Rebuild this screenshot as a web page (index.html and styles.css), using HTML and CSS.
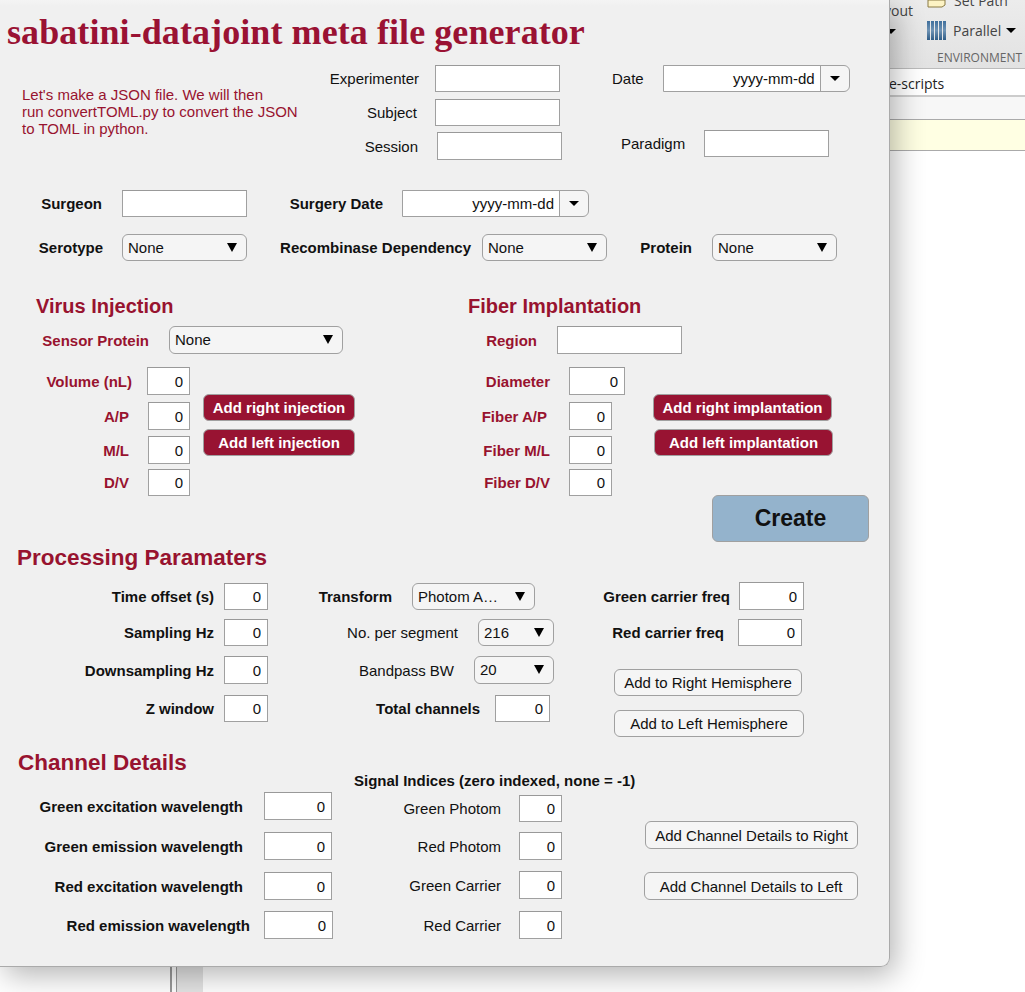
FILE: index.html
```html
<!DOCTYPE html>
<html lang="en">
<head>
    <meta charset="UTF-8">
    <meta name="viewport" content="width=device-width, initial-scale=1.0">
    <title>sabatini-datajoint meta file generator</title>
    <link rel="stylesheet" href="styles.css">
</head>
<body>
<div class="desktop">
    <div class="strips"><span class="strip-line"></span><span class="strip-dark"></span></div>

    <!-- matlab window behind the app -->
    <div class="ribbon">
        <div class="ribbon-layout"><span>Layout</span><i class="caret-sm"></i></div>
        <div class="ribbon-env">
            <div class="ribbon-item setpath">
                <svg width="20" height="8" viewBox="0 0 20 8"><path d="M1 0h17v5l-3 2H1z" fill="#fdf3c4" stroke="#8a7a45"/></svg>
                <span>Set Path</span>
            </div>
            <div class="ribbon-item">
                <svg width="19" height="19" viewBox="0 0 19 19">
                    <defs><linearGradient id="bar" x1="0" y1="0" x2="0" y2="1"><stop offset="0" stop-color="#3f6f9c"/><stop offset="0.5" stop-color="#6f93b4"/><stop offset="1" stop-color="#2f5c86"/></linearGradient></defs>
                    <path d="M0 0h3v19H0zM4 0h3v19H4zM8 0h3v19H8zM12 0h3v19h-3zM16 0h3v19h-3z" fill="url(#bar)"/>
                </svg>
                <span>Parallel</span><i class="caret-sm"></i>
            </div>
            <div class="ribbon-title">ENVIRONMENT</div>
        </div>
    </div>
    <div class="pathbar">e-scripts</div>
    <div class="tabbar"></div>
    <div class="notice"></div>

    <!-- the app window -->
    <main class="window">
        <h1 class="title">sabatini-datajoint meta file generator</h1>

        <section class="top">
            <p class="intro">Let's make a JSON file. We will then<br>run convertTOML.py to convert the JSON<br>to TOML in python.</p>
            <div class="ids">
                <div class="row"><label>Experimenter</label><input class="box"></div>
                <div class="row"><label>Subject</label><input class="box"></div>
                <div class="row"><label>Session</label><input class="box tall"></div>
            </div>
            <div class="dates">
                <div class="row"><label>Date</label><div class="date"><span>yyyy-mm-dd</span><b><i class="caret-sm"></i></b></div></div>
                <div class="row"><label>Paradigm</label><input class="box"></div>
            </div>
        </section>

        <section class="surgery">
            <label class="strong">Surgeon</label><input class="box">
            <label class="strong">Surgery Date</label><div class="date"><span>yyyy-mm-dd</span><b><i class="caret-sm"></i></b></div>
        </section>

        <section class="virus-opts">
            <label class="strong">Serotype</label><div class="drop">None</div>
            <label class="strong">Recombinase Dependency</label><div class="drop">None</div>
            <label class="strong">Protein</label><div class="drop">None</div>
        </section>

        <section class="implant">
            <div class="virus">
                <h2>Virus Injection</h2>
                <div class="sensor"><label class="strong red">Sensor Protein</label><div class="drop tall">None</div></div>
                <div class="coords-wrap">
                    <div class="coords">
                        <div class="coord"><label class="strong red">Volume (nL)</label><input class="box tall num" value="0"></div>
                        <div class="coord"><label class="strong red">A/P</label><input class="box tall num" value="0"></div>
                        <div class="coord"><label class="strong red">M/L</label><input class="box tall num" value="0"></div>
                        <div class="coord"><label class="strong red">D/V</label><input class="box num" value="0"></div>
                    </div>
                    <div class="actions">
                        <button class="btn-red">Add right injection</button>
                        <button class="btn-red">Add left injection</button>
                    </div>
                </div>
            </div>
            <div class="fiber">
                <h2>Fiber Implantation</h2>
                <div class="sensor"><label class="strong red">Region</label><input class="box tall"></div>
                <div class="coords-wrap">
                    <div class="coords">
                        <div class="coord"><label class="strong red">Diameter</label><input class="box tall num" value="0"></div>
                        <div class="coord"><label class="strong red">Fiber A/P</label><input class="box tall num" value="0"></div>
                        <div class="coord"><label class="strong red">Fiber M/L</label><input class="box tall num" value="0"></div>
                        <div class="coord"><label class="strong red">Fiber D/V</label><input class="box num" value="0"></div>
                    </div>
                    <div class="actions">
                        <button class="btn-red">Add right implantation</button>
                        <button class="btn-red">Add left implantation</button>
                        <button class="btn-create">Create</button>
                    </div>
                </div>
            </div>
        </section>

        <section class="processing">
            <h2>Processing Paramaters</h2>
            <div class="proc-cols">
                <div class="proc-left">
                    <div class="coord"><label class="strong">Time offset (s)</label><input class="box num" value="0"></div>
                    <div class="coord"><label class="strong">Sampling Hz</label><input class="box num" value="0"></div>
                    <div class="coord"><label class="strong">Downsampling Hz</label><input class="box tall num" value="0"></div>
                    <div class="coord"><label class="strong">Z window</label><input class="box num" value="0"></div>
                </div>
                <div class="proc-mid">
                    <div class="coord"><label class="strong">Transform</label><div class="drop">Photom A…</div></div>
                    <div class="coord"><label>No. per segment</label><div class="drop">216</div></div>
                    <div class="coord"><label>Bandpass BW</label><div class="drop tall">20</div></div>
                    <div class="coord"><label class="strong">Total channels</label><input class="box num" value="0"></div>
                </div>
                <div class="proc-right">
                    <div class="coord"><label class="strong">Green carrier freq</label><input class="box tall num" value="0"></div>
                    <div class="coord"><label class="strong">Red carrier freq</label><input class="box num" value="0"></div>
                    <button class="btn">Add to Right Hemisphere</button>
                    <button class="btn">Add to Left Hemisphere</button>
                </div>
            </div>
        </section>

        <section class="channels">
            <div class="chan-left">
                <h2>Channel Details</h2>
                <div class="coord"><label class="strong">Green excitation wavelength</label><input class="box tall num" value="0"></div>
                <div class="coord"><label class="strong">Green emission wavelength</label><input class="box tall num" value="0"></div>
                <div class="coord"><label class="strong">Red excitation wavelength</label><input class="box tall num" value="0"></div>
                <div class="coord"><label class="strong">Red emission wavelength</label><input class="box tall num" value="0"></div>
            </div>
            <div class="chan-mid">
                <h3>Signal Indices (zero indexed, none = -1)</h3>
                <div class="coord"><label>Green Photom</label><input class="box num" value="0"></div>
                <div class="coord"><label>Red Photom</label><input class="box tall num" value="0"></div>
                <div class="coord"><label>Green Carrier</label><input class="box tall num" value="0"></div>
                <div class="coord"><label>Red Carrier</label><input class="box tall num" value="0"></div>
            </div>
            <div class="chan-right">
                <button class="btn tall">Add Channel Details to Right</button>
                <button class="btn tall">Add Channel Details to Left</button>
            </div>
        </section>
    </main>
</div>
</body>
</html>
```

FILE: styles.css
```css
* {
    box-sizing: border-box;
}

body {
    margin: 0;
    background-color: white;
    font-family: "Liberation Sans", Arial, sans-serif;
    font-size: 15px;
    color: #111;
}

.desktop {
    position: relative;
    height: 992px;
    padding-left: 889px;
    overflow: hidden;
}

/* background window */
.strips {
    position: absolute;
    left: 170px;
    top: 900px;
    bottom: 0;
    display: flex;
    width: 33px;
}

.strip-line {
    width: 7px;
    border-left: 2px solid #999;
    border-right: 1px solid #999;
}

.strip-dark {
    flex: 1;
    background-color: #e4e4e4;
}

.ribbon {
    display: flex;
    height: 68px;
    background: linear-gradient(#ececec, #e2e2e2);
    font-family: "Open Sans", sans-serif;
    font-size: 14px;
    color: #444;
}

.ribbon-layout {
    width: 38px;
    margin-left: -20px;
    padding-top: 1px;
    white-space: nowrap;
}

.ribbon-layout .caret-sm {
    display: block;
    width: 10px;
    margin: 9px 0 0 17px;
}

.ribbon-env {
    flex: 1;
    padding-left: 20px;
    white-space: nowrap;
}

.ribbon-item {
    display: flex;
    align-items: center;
    gap: 7px;
    height: 20px;
}

.setpath {
    margin-top: -10px;
    align-items: flex-end;
}

.setpath svg {
    margin-bottom: 2px;
}

.ribbon-item:nth-child(2) {
    margin-top: 10px;
}

.ribbon-item .caret-sm {
    margin-left: -2px;
}

.ribbon-title {
    margin: 10px 0 0 10px;
    font-size: 12px;
    line-height: 16px;
    color: #666;
}

.pathbar {
    height: 29px;
    border-top: 1px solid #bbb;
    border-bottom: 2px solid #ccc;
    padding-top: 3px;
    font-family: "Open Sans", sans-serif;
    font-size: 14px;
    line-height: 24px;
    color: #222;
    background-color: white;
}

.tabbar {
    height: 23px;
    background-color: #f7f7f7;
    border-bottom: 1px solid #aaa;
}

.notice {
    height: 31px;
    background-color: #ffffe3;
    border-bottom: 1px solid #aaa;
}

/* app window */
.window {
    position: absolute;
    left: 0;
    top: 0;
    width: 890px;
    height: 967px;
    background: linear-gradient(#f4f4f4, #f0f0f0 6px);
    border-right: 1px solid #aaa;
    border-bottom: 1px solid #aaa;
    border-bottom-right-radius: 9px;
    box-shadow: 5px 8px 30px rgba(0, 0, 0, 0.3);
}

.title {
    height: 65px;
    margin: 0;
    padding: 14px 0 0 7px;
    font-family: "Liberation Serif", serif;
    font-size: 36px;
    line-height: 36px;
    letter-spacing: 0.08px;
    color: #9a1233;
    white-space: nowrap;
}

h2 {
    margin: 0;
    font-size: 20px;
    line-height: 24px;
    color: #98132f;
}

h3 {
    margin: 0;
    font-size: 15px;
    line-height: 16px;
    white-space: nowrap;
}

label {
    text-align: right;
    white-space: nowrap;
}

.strong {
    font-weight: bold;
}

.red {
    color: #98132f;
}

/* controls */
.box {
    display: block;
    width: 125px;
    height: 27px;
    padding: 0 8px;
    border: 1px solid #a0a0a0;
    border-top-color: #999;
    border-radius: 0;
    background-color: white;
    font: inherit;
    color: #111;
}

.num {
    text-align: right;
    padding: 0 6px 0 0;
}

.tall {
    height: 28px;
}

.drop {
    position: relative;
    width: 125px;
    height: 27px;
    padding-left: 5px;
    border: 1px solid #a0a0a0;
    border-radius: 6px;
    background-color: #f5f5f5;
    line-height: 25px;
}

.drop.tall {
    height: 28px;
    line-height: 26px;
}

.drop::after {
    content: "";
    position: absolute;
    right: 9px;
    top: 8px;
    border-left: 5.5px solid transparent;
    border-right: 5.5px solid transparent;
    border-top: 9px solid black;
}

.date {
    display: flex;
    width: 187px;
    height: 27px;
    border: 1px solid #a0a0a0;
    border-radius: 0 6px 6px 0;
    background-color: #f5f5f5;
    line-height: 25px;
}

.date span {
    width: 156px;
    padding-right: 5px;
    background-color: white;
    text-align: right;
}

.date b {
    flex: 1;
    display: flex;
    align-items: center;
    justify-content: center;
    border-left: 1px solid #a0a0a0;
}

.caret-sm {
    display: inline-block;
    border-left: 5px solid transparent;
    border-right: 5px solid transparent;
    border-top: 5px solid black;
}

.btn,
.btn-red,
.btn-create {
    display: block;
    height: 27px;
    padding: 0;
    border: 1px solid #a0a0a0;
    border-radius: 6px;
    font: inherit;
    cursor: pointer;
}

.btn {
    background-color: #f5f5f5;
    color: #111;
}

.btn.tall {
    height: 28px;
}

.btn-red {
    background-color: #981332;
    color: white;
    font-weight: bold;
}

.btn-create {
    width: 157px;
    height: 47px;
    background-color: #94b3cc;
    color: #111;
    font-size: 23px;
    font-weight: bold;
}

/* first block */
.top {
    display: flex;
    height: 125px;
}

.intro {
    width: 308px;
    margin: 0 0 0 22px;
    padding-top: 21px;
    line-height: 17px;
    color: #98132f;
}

.row {
    display: flex;
    align-items: center;
}

.ids {
    width: 232px;
}

.ids .row {
    justify-content: flex-end;
}

.ids .row:nth-child(1) {
    gap: 16px;
    padding-right: 2px;
    margin-bottom: 7px;
}

.ids .row:nth-child(2) {
    gap: 18px;
    padding-right: 2px;
    margin-bottom: 6px;
}

.ids .row:nth-child(3) {
    gap: 19px;
}

.dates {
    margin-left: 50px;
}

.dates .row:nth-child(1) {
    gap: 19px;
}

.dates .row:nth-child(2) {
    gap: 19px;
    margin: 38px 0 0 9px;
}

/* surgery rows */
.surgery,
.virus-opts {
    display: grid;
    align-items: center;
}

.surgery label,
.virus-opts label {
    padding-right: 20px;
}

.surgery {
    grid-template-columns: 122px 125px 155px 187px;
}

.surgery label:nth-of-type(2) {
    padding-right: 19px;
}

.virus-opts {
    grid-template-columns: 122px 125px 235px 125px 105px 125px;
    margin-top: 17px;
}

.virus-opts label:nth-of-type(1) {
    padding-right: 19px;
}

.virus-opts label:nth-of-type(2) {
    padding-right: 11px;
}

/* virus and fiber */
.implant {
    display: flex;
    height: 250px;
    margin-top: 33px;
}

.virus {
    width: 445px;
}

.fiber {
    flex: 1;
}

.virus h2 {
    margin-left: 36px;
}

.fiber h2 {
    margin-left: 23px;
}

.sensor {
    display: grid;
    align-items: center;
    margin-top: 8px;
}

.sensor label {
    padding-right: 20px;
}

.virus .sensor {
    grid-template-columns: 169px 174px;
}

.virus .sensor .drop {
    width: 174px;
}

.fiber .sensor {
    grid-template-columns: 112px 125px;
}

.coords-wrap {
    display: flex;
    margin-top: 13px;
}

.coord {
    display: grid;
    align-items: center;
}

.virus .coord {
    grid-template-columns: 148px 42px;
}

.fiber .coord {
    grid-template-columns: 124px 43px;
}

.coord .box {
    width: 100%;
}

.coords {
    width: 190px;
}

.fiber .coords {
    width: 180px;
}

.coords .coord:nth-child(1) {
    margin-bottom: 7px;
}

.coords .coord:nth-child(2) {
    margin-bottom: 6px;
}

.coords .coord:nth-child(3) {
    margin-bottom: 5px;
}

.virus .coord label {
    padding-right: 19px;
}

.virus .coord:nth-child(1) label {
    padding-right: 16px;
}

.virus .coord:nth-child(1) .box {
    width: 43px;
    margin-left: -1px;
}

.fiber .coord label {
    padding-right: 19px;
}

.fiber .coord:nth-child(2) label {
    padding-right: 22px;
}

.fiber .coord:nth-child(1) .box {
    width: 56px;
}

.actions {
    display: flex;
    flex-direction: column;
    align-items: flex-start;
    gap: 8px;
    margin-top: 27px;
}

.virus .actions {
    margin-left: 13px;
}

.virus .btn-red {
    width: 152px;
}

.fiber .actions {
    margin-left: 28px;
}

.fiber .btn-red {
    width: 179px;
}

.fiber .btn-red:nth-child(2) {
    margin-left: 1px;
}

.btn-create {
    margin: 31px 0 0 59px;
}

/* processing */
.processing h2,
.chan-left h2 {
    padding-top: 1px;
    font-size: 22.5px;
    line-height: 26px;
}

.processing h2 {
    margin-left: 17px;
}

.proc-cols {
    display: flex;
    margin-top: 12px;
    height: 166px;
}

.proc-left {
    width: 268px;
}

.proc-left .coord {
    grid-template-columns: 224px 44px;
}

.proc-left label {
    padding-right: 10px;
}

.proc-left .coord:nth-child(1),
.proc-mid .coord:nth-child(1) {
    margin-bottom: 9px;
}

.proc-left .coord:nth-child(2),
.proc-mid .coord:nth-child(2) {
    margin-bottom: 10px;
}

.proc-left .coord:nth-child(3),
.proc-mid .coord:nth-child(3) {
    margin-bottom: 11px;
}

.proc-mid {
    width: 286px;
}

.proc-mid label {
    padding-right: 20px;
}

.proc-mid .drop {
    width: 100%;
}

.proc-mid .coord:nth-child(1) {
    grid-template-columns: 144px 123px;
}

.proc-mid .coord:nth-child(2) {
    grid-template-columns: 210px 76px;
}

.proc-mid .coord:nth-child(3) {
    grid-template-columns: 206px 80px;
}

.proc-mid .coord:nth-child(4) {
    grid-template-columns: 227px 55px;
}

.proc-mid .coord:nth-child(4) label {
    padding-right: 15px;
}

.proc-right {
    margin-top: -1px;
}

.proc-right .coord:nth-child(1) {
    grid-template-columns: 185px 65px;
    margin-bottom: 9px;
}

.proc-right .coord:nth-child(1) label {
    padding-right: 9px;
}

.proc-right .coord:nth-child(2) {
    grid-template-columns: 184px 64px;
}

.proc-right .coord:nth-child(2) label {
    padding-right: 14px;
}

.proc-right .btn {
    margin-left: 60px;
    width: 188px;
}

.proc-right .btn:nth-child(3) {
    margin-top: 23px;
}

.proc-right .btn:nth-child(4) {
    width: 190px;
    margin-top: 14px;
}

/* channels */
.channels {
    display: flex;
}

.chan-left {
    width: 333px;
}

.chan-left h2 {
    margin: 0 0 16px 18px;
}

.chan-left .coord {
    grid-template-columns: 264px 68px;
    margin-bottom: 12px;
}

.chan-left label {
    padding-right: 21px;
}

.chan-left .coord:nth-child(4) {
    margin-bottom: 11px;
}

.chan-left .coord:nth-child(5) {
    grid-template-columns: 264px 69px;
}

.chan-left .coord:nth-child(5) label {
    padding-right: 14px;
}

.chan-mid {
    width: 229px;
    padding-top: 24px;
}

.chan-mid h3 {
    margin: 0 0 6px 21px;
}

.chan-mid .coord {
    grid-template-columns: 186px 43px;
    margin-bottom: 10px;
}

.chan-mid label {
    padding-right: 18px;
}

.chan-mid .coord:nth-child(3) {
    margin-bottom: 11px;
}

.chan-mid .coord:nth-child(4) {
    margin-bottom: 12px;
}

.chan-right {
    padding-top: 72px;
    display: flex;
    flex-direction: column;
    gap: 23px;
}

.chan-right .btn:nth-child(1) {
    width: 213px;
    margin-left: 83px;
}

.chan-right .btn:nth-child(2) {
    width: 214px;
    margin-left: 82px;
}
```
